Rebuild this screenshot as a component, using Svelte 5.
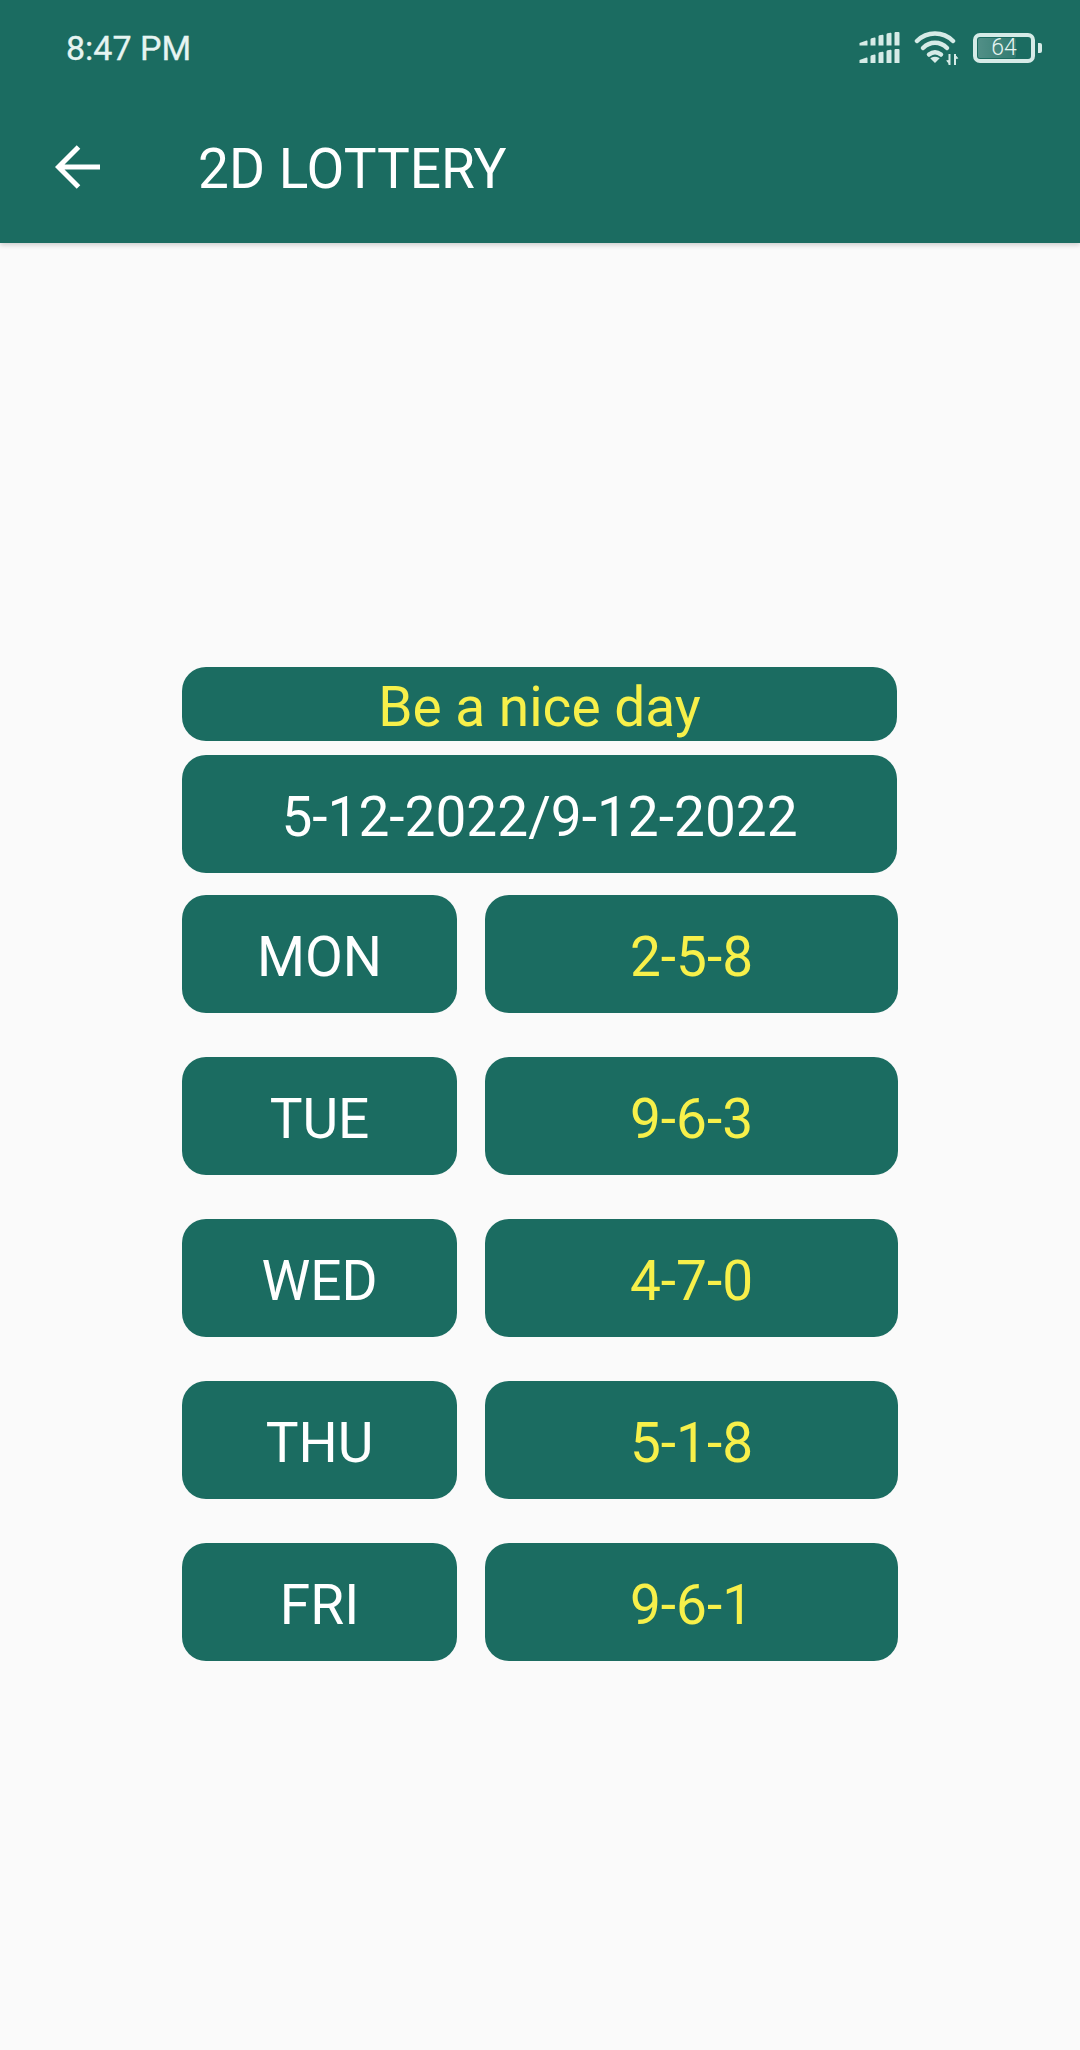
<script>
  const rows = [
    ['MON', '2-5-8'],
    ['TUE', '9-6-3'],
    ['WED', '4-7-0'],
    ['THU', '5-1-8'],
    ['FRI', '9-6-1']
  ];
</script>

<div class="page">
  <header class="appbar">
    <div class="status">
      <span class="time">8:47 PM</span>
      <div class="icons">
        <svg class="signal" width="42" height="32" viewBox="0 0 42 32" fill="#d6ebe7">
          <path d="M0.500 11l7-2.500q1-.3 1 .8V13.500h-8zM11.500 7.500q0-1 1-1.300l3-.7q1-.2 1 .8V13.500h-5zM19.500 4.500q0-1 1-1.200l3-.6q1-.2 1 .8V13.500h-5zM27.500 2.500q0-1 1-1.200l3-.5q1-.2 1 .8V13.500h-5zM35.500 1q0-1 1-1h3q1 0 1 1V13.500h-5z"/>
          <path d="M0.500 28l7-2.500q1-.3 1 .8V31h-8zM11.500 24.500q0-1 1-1.300l3-.7q1-.2 1 .8V31h-5zM19.500 21.500q0-1 1-1.200l3-.6q1-.2 1 .8V31h-5zM27.500 19.500q0-1 1-1.200l3-.5q1-.2 1 .8V31h-5zM35.500 18q0-1 1-1h3q1 0 1 1V31h-5z"/>
        </svg>
        <svg class="wifi" width="46" height="36" viewBox="0 0 46 36" fill="none" stroke="#d6ebe7" stroke-width="4.500" stroke-linecap="round">
          <path d="M3 11C13 1 29 1 39 11"/>
          <path d="M9 18C16 11 26 11 33 18"/>
          <path d="M15 24.500C19 21.500 23 21.500 27 24.500"/>
          <path d="M17.500 28.500L21 32l3.500-3.500C22 27 20 27 17.500 28.500z" fill="#d6ebe7" stroke-width="1.500"/>
          <path d="M35.500 24v11M41 24v11" stroke-width="2" stroke-linecap="butt"/>
          <path d="M33 31l2.500 3 0-3zM43.500 28l-2.500-3v3z" fill="#d6ebe7" stroke-width="1"/>
        </svg>
        <div class="battery">
          <div class="cell"><div class="fill"></div><span class="level">64</span></div>
          <div class="tip"></div>
        </div>
      </div>
    </div>
    <div class="toolbar">
      <svg class="back" width="46" height="46" viewBox="0 0 46 46" fill="none" stroke="#fff" stroke-width="5">
        <path d="M45 23H4M23.500 3L3.500 23l20 20"/>
      </svg>
      <h1>2D LOTTERY</h1>
    </div>
  </header>

  <main class="board">
    <div class="cell-box greeting">Be a nice day</div>
    <div class="cell-box range">5-12-2022/9-12-2022</div>
    <div class="rows">
      {#each rows as [day, value]}
        <div class="row">
          <div class="cell-box day">{day}</div>
          <div class="cell-box value">{value}</div>
        </div>
      {/each}
    </div>
  </main>
</div>

<style>
  :global(body) {
    margin: 0;
    background: #fafafa;
  }
  .page {
    min-height: 2050px;
    background: #fafafa;
    font-family: Roboto, sans-serif;
    color: #fff;
  }
  .appbar {
    height: 243px;
    background: #1b6c61;
    box-shadow: 0 2px 5px rgba(0, 0, 0, 0.18);
    box-sizing: border-box;
    position: relative;
  }
  .status {
    height: 95px;
    display: flex;
    align-items: center;
    justify-content: space-between;
    padding: 0 38px 0 66px;
  }
  .time {
    font-size: 34px;
    color: #e6f4f1;
    -webkit-text-stroke: 0.3px #e6f4f1;
  }
  .icons {
    display: flex;
    align-items: center;
    gap: 13px;
  }
  .battery {
    display: flex;
    align-items: center;
    gap: 3px;
  }
  .cell {
    width: 62px;
    height: 30px;
    box-sizing: border-box;
    border: 4px solid #d6ebe7;
    border-radius: 7px;
    position: relative;
    display: flex;
    align-items: center;
    justify-content: center;
  }
  .fill {
    position: absolute;
    left: 1px;
    top: 1px;
    bottom: 1px;
    width: 38px;
    background: linear-gradient(90deg, rgba(255, 255, 255, 0.24), rgba(255, 255, 255, 0.1));
    border-radius: 2px;
  }
  .level {
    position: relative;
    font-size: 23px;
    font-weight: 300;
    line-height: 1;
    color: #e6f4f1;
  }
  .tip {
    width: 4px;
    height: 10px;
    background: #d6ebe7;
    border-radius: 0 2px 2px 0;
  }
  .toolbar {
    height: 148px;
    display: flex;
    align-items: center;
    padding-left: 55px;
  }
  .back {
    flex: none;
    margin-bottom: 5px;
  }
  h1 {
    margin: 0 0 0 97px;
    font-size: 55px;
    font-weight: 400;
    color: #fff;
  }
  .board {
    width: 716px;
    margin-left: 182px;
    padding-top: 424px;
  }
  .cell-box {
    background: #1b6c61;
    border-radius: 24px;
    display: flex;
    align-items: center;
    justify-content: center;
    font-size: 55px;
    color: #fff;
  }
  .greeting {
    width: 715px;
    height: 74px;
    color: #f7f04a;
    padding-top: 6px;
    box-sizing: border-box;
  }
  .range {
    width: 715px;
    height: 118px;
    margin-top: 14px;
    padding-top: 6px;
    box-sizing: border-box;
  }
  .rows {
    margin-top: 22px;
    display: flex;
    flex-direction: column;
    gap: 44px;
  }
  .row {
    display: flex;
    gap: 28px;
  }
  .day,
  .value {
    height: 118px;
    padding-top: 6px;
    box-sizing: border-box;
  }
  .day {
    width: 275px;
  }
  .value {
    width: 413px;
    color: #f7f04a;
  }
</style>
